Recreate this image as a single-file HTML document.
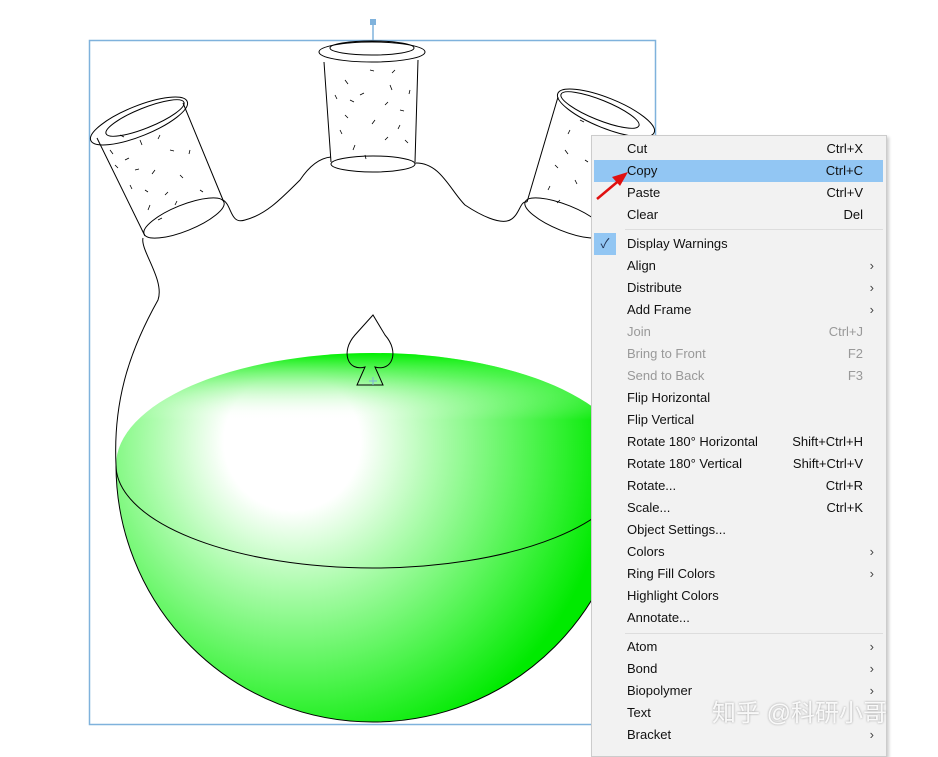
<!DOCTYPE html>
<html><head><meta charset="utf-8"><style>
body{margin:0;width:938px;height:747px;background:#fff;overflow:hidden;position:relative;font-family:"Liberation Sans","Noto Sans CJK SC",sans-serif}
#menu{position:absolute;left:591px;top:135px;width:294px;height:620px;background:#f2f2f2;border:1px solid #ccc;box-shadow:2px 2px 3px rgba(0,0,0,.2)}
.it{position:absolute;left:2px;right:3px;height:22px;font-size:13px;color:#111;line-height:22px}
.it .l{position:absolute;left:33px}
.it .r{position:absolute;right:20px}
.it .a{position:absolute;right:9px;color:#444}
.dis{color:#999}
.sel{background:#92c6f3}
.sep{position:absolute;left:33px;right:3px;height:1px;background:#ddd}
</style></head><body>
<svg width="938" height="747" style="position:absolute;left:0;top:0">
<defs>
<radialGradient id="g" gradientUnits="userSpaceOnUse" cx="300" cy="450" r="310" fx="290" fy="440">
<stop offset="0" stop-color="#fff"/><stop offset="0.22" stop-color="#fff"/><stop offset="0.45" stop-color="#b0fcb0"/><stop offset="0.75" stop-color="#50f450"/><stop offset="1" stop-color="#00ea00"/>
</radialGradient>
<linearGradient id="t" x1="0" y1="353" x2="0" y2="420" gradientUnits="userSpaceOnUse">
<stop offset="0" stop-color="#00ee00" stop-opacity="1"/><stop offset="0.35" stop-color="#40f440" stop-opacity="0.6"/><stop offset="1" stop-color="#fff" stop-opacity="0"/>
</linearGradient>
</defs>
<rect x="89.5" y="40.5" width="566" height="684" fill="none" stroke="#7fb2dc" stroke-width="1.5"/>
<line x1="373" y1="22" x2="373" y2="40" stroke="#7fb2dc" stroke-width="1.5"/>
<rect x="370" y="19" width="6" height="6" fill="#7fb2dc"/>
<path d="M116,465 A257,112 0 0 1 630,465 A257,257 0 0 1 116,465Z" fill="url(#g)"/>
<path d="M116,465 A257,112 0 0 1 630,465 Z" fill="url(#t)"/>
<path d="M116,465 A257,257 0 0 0 630,465" fill="none" stroke="#000"/>
<path d="M116,465 A257,103 0 0 0 630,465" fill="none" stroke="#000"/>
<path d="M143,238 C140,250 165,280 158,300 C130,350 113,400 116,465" fill="none" stroke="#000"/>
<path d="M97,138 L145,236 M183,103 L223,200" stroke="#000" fill="none"/>
<ellipse cx="139" cy="121" rx="52" ry="15" transform="rotate(-22 139 121)" fill="none" stroke="#000"/>
<ellipse cx="145" cy="118" rx="42" ry="10" transform="rotate(-22 145 118)" fill="none" stroke="#000"/>
<ellipse cx="184" cy="218" rx="43" ry="13" transform="rotate(-22 184 218)" fill="none" stroke="#000"/>
<path d="M223,200 C232,205 230,225 245,220 C265,215 280,200 300,180 C310,165 320,158 331,157" fill="none" stroke="#000"/>
<ellipse cx="372" cy="52" rx="53" ry="10" fill="none" stroke="#000"/>
<ellipse cx="372" cy="48" rx="42" ry="7" fill="none" stroke="#000"/>
<ellipse cx="373" cy="164" rx="42" ry="8" fill="none" stroke="#000"/>
<path d="M324,62 L331,162 M418,60 L415,162" stroke="#000" fill="none"/>
<path d="M415,163 C440,162 450,190 465,205 C480,215 500,225 510,220 C520,215 520,200 527,202" fill="none" stroke="#000"/>
<ellipse cx="606" cy="113" rx="52" ry="15" transform="rotate(22 606 113)" fill="none" stroke="#000"/>
<ellipse cx="600" cy="110" rx="42" ry="10" transform="rotate(22 600 110)" fill="none" stroke="#000"/>
<ellipse cx="565" cy="218" rx="43" ry="13" transform="rotate(22 565 218)" fill="none" stroke="#000"/>
<path d="M558,97 L527,202" stroke="#000" fill="none"/>
<path d="M373,315 L355,335 C340,352 348,372 365,367 L357,385 L383,385 L375,367 C392,372 400,352 385,335Z" fill="none" stroke="#000"/>
<path d="M369,381 h8 M373,377 v8" stroke="#7fb2dc"/>
<g stroke="#000" stroke-width="0.8">
<path d="M110,150 l3,4 M125,160 l4,-2 M140,140 l2,5 M155,170 l-3,4 M170,150 l4,1 M130,185 l2,4 M165,195 l3,-3 M150,205 l-2,5 M180,175 l3,3 M120,135 l4,2 M115,165 l3,3 M135,170 l4,-1 M160,135 l-2,4 M145,190 l3,2 M175,205 l2,-4 M190,150 l-1,4 M200,190 l3,2 M158,220 l4,-2 M345,80 l3,4 M360,95 l4,-2 M390,85 l2,5 M375,120 l-3,4 M400,110 l4,1 M340,130 l2,4 M385,140 l3,-3 M355,145 l-2,5 M405,140 l3,3 M350,100 l4,2 M335,95 l2,4 M370,70 l4,1 M395,70 l-3,3 M345,115 l3,3 M400,125 l-2,4 M365,155 l1,4 M385,105 l3,-3 M410,90 l-1,4 M565,150 l3,4 M575,180 l2,4 M560,200 l-3,3 M580,120 l4,2 M570,130 l-2,4 M585,160 l3,2 M548,190 l2,-4 M555,165 l3,3"/>
</g>
</svg>
<div id="menu">
<div class="it" style="top:2px"><span class="l">Cut</span><span class="r">Ctrl+X</span></div>
<div class="it sel" style="top:24px"><span class="l">Copy</span><span class="r">Ctrl+C</span></div>
<div class="it" style="top:46px"><span class="l">Paste</span><span class="r">Ctrl+V</span></div>
<div class="it" style="top:68px"><span class="l">Clear</span><span class="r">Del</span></div>
<div class="sep" style="top:93px"></div>
<div class="it" style="top:97px"><span style="position:absolute;left:0;top:0;width:22px;height:22px;background:#92c6f3;text-align:center;color:#235">✓</span><span class="l">Display Warnings</span></div>
<div class="it" style="top:119px"><span class="l">Align</span><span class="a">›</span></div>
<div class="it" style="top:141px"><span class="l">Distribute</span><span class="a">›</span></div>
<div class="it" style="top:163px"><span class="l">Add Frame</span><span class="a">›</span></div>
<div class="it dis" style="top:185px"><span class="l">Join</span><span class="r">Ctrl+J</span></div>
<div class="it dis" style="top:207px"><span class="l">Bring to Front</span><span class="r">F2</span></div>
<div class="it dis" style="top:229px"><span class="l">Send to Back</span><span class="r">F3</span></div>
<div class="it" style="top:251px"><span class="l">Flip Horizontal</span></div>
<div class="it" style="top:273px"><span class="l">Flip Vertical</span></div>
<div class="it" style="top:295px"><span class="l">Rotate 180° Horizontal</span><span class="r">Shift+Ctrl+H</span></div>
<div class="it" style="top:317px"><span class="l">Rotate 180° Vertical</span><span class="r">Shift+Ctrl+V</span></div>
<div class="it" style="top:339px"><span class="l">Rotate...</span><span class="r">Ctrl+R</span></div>
<div class="it" style="top:361px"><span class="l">Scale...</span><span class="r">Ctrl+K</span></div>
<div class="it" style="top:383px"><span class="l">Object Settings...</span></div>
<div class="it" style="top:405px"><span class="l">Colors</span><span class="a">›</span></div>
<div class="it" style="top:427px"><span class="l">Ring Fill Colors</span><span class="a">›</span></div>
<div class="it" style="top:449px"><span class="l">Highlight Colors</span></div>
<div class="it" style="top:471px"><span class="l">Annotate...</span></div>
<div class="sep" style="top:497px"></div>
<div class="it" style="top:500px"><span class="l">Atom</span><span class="a">›</span></div>
<div class="it" style="top:522px"><span class="l">Bond</span><span class="a">›</span></div>
<div class="it" style="top:544px"><span class="l">Biopolymer</span><span class="a">›</span></div>
<div class="it" style="top:566px"><span class="l">Text</span></div>
<div class="it" style="top:588px"><span class="l">Bracket</span><span class="a">›</span></div>
</div>
<svg width="938" height="747" style="position:absolute;left:0;top:0">
<path d="M597,199 L622,178" stroke="#e01010" stroke-width="2.5"/>
<path d="M628,172 L612,177 L620,186Z" fill="#e01010"/>
</svg>
<div style="position:absolute;left:712px;top:693px;font-size:24px;color:rgba(255,255,255,.9);text-shadow:0 0 2px #999">知乎 @科研小哥</div>
</body></html>
